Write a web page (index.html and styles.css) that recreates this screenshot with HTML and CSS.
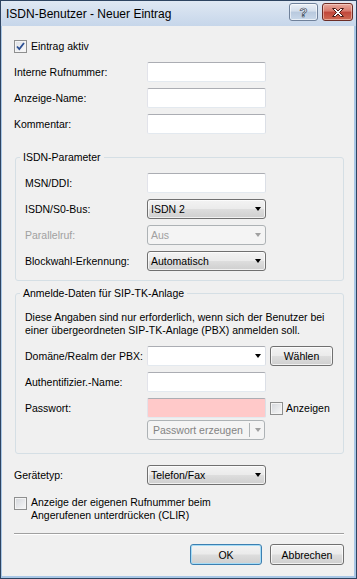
FILE: index.html
```html
<!DOCTYPE html>
<html lang="de">
<head>
    <meta charset="UTF-8">
    <title>ISDN-Benutzer - Neuer Eintrag</title>
    <link rel="stylesheet" href="styles.css">
</head>
<body>
    <div class="window">
        <!-- Titelleiste -->
        <div class="titlebar">
            <span class="title">ISDN-Benutzer - Neuer Eintrag</span>
            <div class="caption-buttons">
                <span class="cap-btn help"><span class="help-glyph">?</span></span>
                <span class="cap-btn close">
                    <svg width="14" height="11" viewBox="0 0 14 11">
                        <path d="M1.5 1.5h3l2.5 2.5 2.5-2.5h3l-4 4 4 4h-3l-2.5-2.5-2.5 2.5h-3l4-4z" fill="#fff" stroke="#4a1c17" stroke-width="1" stroke-linejoin="round"/>
                    </svg>
                </span>
            </div>
        </div>

        <div class="client">
            <label class="check-row first">
                <span class="checkbox checked">
                    <svg width="11" height="11" viewBox="0 0 11 11"><path d="M2 5.5l2.3 2.5 4.7-6" fill="none" stroke="#2b4f93" stroke-width="1.8"/></svg>
                </span>
                Eintrag aktiv
            </label>

            <div class="rows top-rows">
                <span class="label">Interne Rufnummer:</span><span class="textbox"></span>
                <span class="label">Anzeige-Name:</span><span class="textbox"></span>
                <span class="label">Kommentar:</span><span class="textbox"></span>
            </div>

            <!-- ISDN-Parameter -->
            <fieldset class="group group-isdn">
                <legend>ISDN-Parameter</legend>
                <div class="rows">
                    <span class="label">MSN/DDI:</span><span class="textbox"></span>
                    <span class="label">ISDN/S0-Bus:</span><span class="combo">ISDN 2<i class="arrow"></i></span>
                    <span class="label disabled">Parallelruf:</span><span class="combo disabled">Aus<i class="arrow"></i></span>
                    <span class="label">Blockwahl-Erkennung:</span><span class="combo">Automatisch<i class="arrow"></i></span>
                </div>
            </fieldset>

            <!-- SIP-Anmeldung -->
            <fieldset class="group group-sip">
                <legend>Anmelde-Daten für SIP-TK-Anlage</legend>
                <p class="hint">Diese Angaben sind nur erforderlich, wenn sich der Benutzer bei<br>einer übergeordneten SIP-TK-Anlage (PBX) anmelden soll.</p>
                <div class="rows">
                    <span class="label">Domäne/Realm der PBX:</span>
                    <div class="with-extra">
                        <span class="textbox editcombo"><i class="arrow"></i></span>
                        <span class="button choose">Wählen</span>
                    </div>
                    <span class="label">Authentifizier.-Name:</span><span class="textbox"></span>
                    <span class="label">Passwort:</span>
                    <div class="with-extra">
                        <span class="textbox password"></span>
                        <label class="check-row inline"><span class="checkbox"></span>Anzeigen</label>
                    </div>
                </div>
                <span class="split-button">Passwort erzeugen<span class="split-sep"></span><i class="arrow"></i></span>
            </fieldset>

            <div class="rows top-rows device">
                <span class="label">Gerätetyp:</span><span class="combo">Telefon/Fax<i class="arrow"></i></span>
            </div>

            <label class="check-row clir">
                <span class="checkbox"></span>
                <span>Anzeige der eigenen Rufnummer beim<br>Angerufenen unterdrücken (CLIR)</span>
            </label>

            <div class="separator"></div>

            <div class="footer">
                <span class="button default">OK</span>
                <span class="button cancel">Abbrechen</span>
            </div>
        </div>
    </div>
</body>
</html>
```

FILE: styles.css
```css
/* Reset */
* {
    margin: 0;
    padding: 0;
    box-sizing: border-box;
}

body {
    background: #fff;
    font-family: 'Liberation Sans', Arial, sans-serif;
    font-size: 10.5px;
    color: #000;
}

/* Fenster */
.window {
    width: 357px;
    height: 579px;
    border: 1px solid #2e4461;
    background: #a9c7e6;
    padding: 0 2px 2px 1px;
    display: flex;
    flex-direction: column;
}

.titlebar {
    height: 25px;
    margin: 0 -2px 0 -1px;
    background: linear-gradient(#dfe8f3, #c6d6ea);
    display: flex;
    align-items: flex-start;
    justify-content: space-between;
    padding: 0 3px 0 5px;
}

.title {
    font-size: 12px;
    line-height: 26px;
}

.caption-buttons {
    display: flex;
    gap: 4px;
    padding-top: 2px;
}

.cap-btn {
    height: 18px;
    border-radius: 3px;
    display: flex;
    align-items: center;
    justify-content: center;
}

.help {
    width: 29px;
    border: 1px solid #6f819a;
    background: linear-gradient(#eaf0f7 0%, #d3deeb 45%, #b8c9de 50%, #c9d8ea 100%);
    box-shadow: inset 0 0 0 1px rgba(255, 255, 255, 0.6);
}

.help-glyph {
    font-weight: bold;
    font-size: 13px;
    color: #fff;
    -webkit-text-stroke: 0.7px #3a4a5e;
    line-height: 1;
}

.close {
    width: 31px;
    border: 1px solid #6b2c25;
    background: linear-gradient(#e9a99d 0%, #d7796b 45%, #c0463a 50%, #cf6a52 100%);
    box-shadow: inset 0 0 0 1px rgba(255, 230, 220, 0.5);
}

.client {
    flex: 1;
    background: #f0f0f0;
    padding: 14px 10px 0 12px;
}

/* Kontrollkästchen */
.check-row {
    display: flex;
    align-items: center;
    gap: 4px;
    line-height: 13px;
}

.checkbox {
    width: 13px;
    height: 13px;
    flex-shrink: 0;
    border: 1px solid #8e8f8f;
    background: linear-gradient(135deg, #d3d6db, #f8f8f8);
    box-shadow: inset 0 0 0 1px #f4f4f4;
    display: flex;
    align-items: center;
    justify-content: center;
}

.checkbox.checked {
    background: linear-gradient(135deg, #dde0e5, #fafafa);
}

/* Zeilen */
.rows {
    display: grid;
    grid-template-columns: 122px auto;
    grid-auto-rows: 20px;
    row-gap: 6px;
    align-items: center;
}

.top-rows {
    grid-template-columns: 133px auto;
    margin-top: 9px;
}

.label.disabled {
    color: #a0a0a0;
}

.textbox {
    display: block;
    width: 119px;
    height: 20px;
    background: #fff;
    border: 1px solid;
    border-color: #abadb3 #dbdfe6 #e3e9ef #e2e3ea;
    border-radius: 2px;
}

.textbox.password {
    background: #ffc9c9;
}

.editcombo {
    display: flex;
    align-items: center;
    justify-content: flex-end;
    padding-right: 4px;
}

.combo {
    width: 119px;
    height: 20px;
    border: 1px solid #707070;
    border-radius: 3px;
    background: linear-gradient(#f3f3f3 0%, #ebebeb 48%, #dddddd 52%, #cfcfcf 100%);
    box-shadow: inset 0 0 0 1px rgba(255, 255, 255, 0.7);
    display: flex;
    align-items: center;
    padding: 0 4px 0 3px;
}

.combo.disabled {
    border-color: #adb2b5;
    background: #f4f4f4;
    color: #a0a0a0;
    box-shadow: none;
}

.arrow {
    width: 1px;
    height: 0;
    margin-left: auto;
    border-left: 3px solid transparent;
    border-right: 3px solid transparent;
    border-top: 4px solid #000;
}

.disabled .arrow,
.split-button .arrow {
    border-top-color: #a0a0a0;
}

/* Gruppen */
.group {
    width: 329px;
    margin-left: 1px;
    border: 1px solid #d5dfe5;
    border-radius: 3px;
    padding: 9px 0 9px 9px;
}

.group legend {
    margin-left: -5px;
    padding: 0 3px;
    line-height: 13px;
}

.group-isdn {
    margin-top: 17px;
}

.group-sip {
    margin-top: 6px;
    padding-top: 11px;
    padding-bottom: 13px;
}

.hint {
    line-height: 13px;
    margin-bottom: 9px;
}

.with-extra {
    display: flex;
    align-items: center;
}

.button {
    height: 21px;
    border: 1px solid #707070;
    border-radius: 3px;
    background: linear-gradient(#f3f3f3 0%, #ebebeb 48%, #dddddd 52%, #cfcfcf 100%);
    box-shadow: inset 0 0 0 1px rgba(255, 255, 255, 0.7);
    display: flex;
    align-items: center;
    justify-content: center;
}

.choose {
    width: 63px;
    height: 20px;
    margin-left: 4px;
}

.check-row.inline {
    margin-left: 4px;
    gap: 3px;
}

.split-button {
    width: 118px;
    height: 20px;
    margin: 2px 0 0 122px;
    border: 1px solid #adb2b5;
    border-radius: 3px;
    background: #f4f4f4;
    color: #838383;
    display: flex;
    align-items: center;
    padding: 0 3px 0 5px;
}

.split-sep {
    width: 1px;
    height: 14px;
    background: #adb2b5;
    margin-left: 6px;
}

.device {
    margin-top: 11px;
}

.clir {
    margin-top: 11px;
    align-items: flex-start;
}

.clir .checkbox {
    margin-top: 1px;
}

.separator {
    height: 2px;
    margin-top: 11px;
    border-top: 1px solid #a0a0a0;
    border-bottom: 1px solid #fff;
}

.footer {
    display: flex;
    justify-content: flex-end;
    gap: 8px;
    margin-top: 9px;
}

.default {
    width: 72px;
    border-color: #3c7fb1;
    box-shadow: inset 0 0 0 1px #a6dcf6;
}

.cancel {
    width: 74px;
}
```
